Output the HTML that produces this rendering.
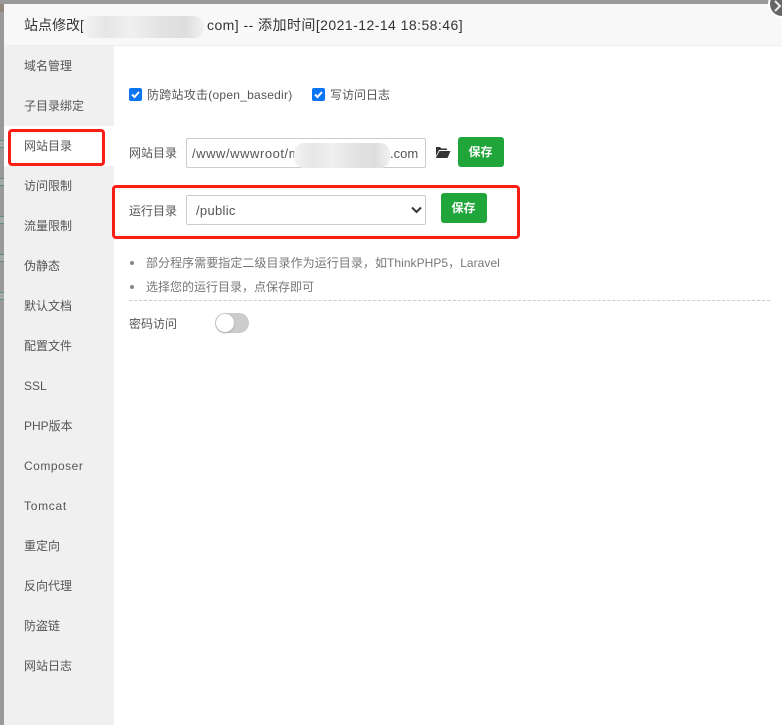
<!DOCTYPE html>
<html><head><meta charset="utf-8">
<style>
html,body{margin:0;padding:0;background:#fff}
body{width:782px;height:725px;position:relative;overflow:hidden;font-family:"Liberation Sans","Noto Sans CJK SC",sans-serif;font-size:12px;color:#555}
.a{position:absolute;white-space:nowrap}
.nav{position:absolute;left:4px;width:110px;height:40px;line-height:41px;padding-left:20px;box-sizing:border-box;color:#555}
.red{position:absolute;border:3px solid #fb1e14;border-radius:4px;box-sizing:border-box}
.btn{position:absolute;width:46px;height:30px;background:#20a53a;border-radius:3px;color:#fff;font-weight:bold;text-align:center;line-height:30px;text-indent:-1px}
.field{position:absolute;left:186px;width:240px;height:30px;border:1px solid #ccc;border-radius:2px;box-sizing:border-box;background:#fff;color:#555;line-height:30px;font-size:13px}
.cb{position:absolute;width:13px;height:13px;background:#0a76f6;border-radius:2px}
.smudge{position:absolute;background:linear-gradient(90deg,#f4f4f4,#e6e6e6 20%,#f0f0f0 40%,#e2e2e2 65%,#dedede 85%,#f2f2f2);border-radius:10px}
.dot{position:absolute;width:4px;height:4px;background:#888;border-radius:50%;left:130px}
.edge{position:absolute;left:0;width:4px;height:8px;box-sizing:border-box;border-top:1px solid #5f8f78;border-bottom:1px solid #5f8f78;background:#a4aaa6}
</style></head>
<body>
<div class="a" style="left:0;top:0;width:782px;height:4px;background:#999"></div>
<div class="a" style="left:0;top:0;width:4px;height:725px;background:#999"></div>
<div class="a" style="left:0;top:4px;width:4px;height:8px;background:#8f8a78"></div>
<div class="edge" style="top:140px"></div>
<div class="edge" style="top:178px"></div>
<div class="edge" style="top:216px"></div>
<div class="edge" style="top:254px"></div>
<div class="edge" style="top:292px"></div>

<div class="a" style="left:4px;top:4px;width:778px;height:41px;background:#f8f8f8;border-bottom:1px solid #eee"></div>
<div class="a" style="left:24px;top:15px;font-size:14px;line-height:20px;color:#333">站点修改[</div>
<div class="smudge" style="left:82px;top:16px;width:122px;height:22px"></div>
<div class="a" style="left:207px;top:15px;font-size:14px;line-height:20px;color:#333;letter-spacing:.45px">com] -- 添加时间[2021-12-14 18:58:46]</div>

<div class="a" style="left:768px;top:-10px;width:28px;height:28px;background:#666;border:2px solid #fff;border-radius:50%;box-sizing:border-box"></div>
<svg class="a" style="left:774px;top:0" width="8" height="12"><path d="M1 1L6 6L1 11" stroke="#eee" stroke-width="2" fill="none"/></svg>

<div class="a" style="left:4px;top:46px;width:110px;height:679px;background:#f0f0f0"></div>
<div class="nav" style="top:46px">域名管理</div>
<div class="nav" style="top:86px">子目录绑定</div>
<div class="nav" style="top:126px;background:#fff">网站目录</div>
<div class="nav" style="top:166px">访问限制</div>
<div class="nav" style="top:206px">流量限制</div>
<div class="nav" style="top:246px">伪静态</div>
<div class="nav" style="top:286px">默认文档</div>
<div class="nav" style="top:326px">配置文件</div>
<div class="nav" style="top:366px">SSL</div>
<div class="nav" style="top:406px">PHP版本</div>
<div class="nav" style="top:446px;letter-spacing:.5px">Composer</div>
<div class="nav" style="top:486px;letter-spacing:.7px">Tomcat</div>
<div class="nav" style="top:526px">重定向</div>
<div class="nav" style="top:566px">反向代理</div>
<div class="nav" style="top:606px">防盗链</div>
<div class="nav" style="top:646px">网站日志</div>

<div class="red" style="left:8px;top:129px;width:97px;height:37px"></div>
<div class="red" style="left:112px;top:185px;width:408px;height:54px"></div>

<div class="cb" style="left:129px;top:88px"></div>
<svg class="a" style="left:129px;top:88px" width="13" height="13"><path d="M3 6.5L5.5 9L10 4" stroke="#fff" stroke-width="2" fill="none"/></svg>
<div class="a" style="left:147px;top:86px;line-height:18px;letter-spacing:.25px">防跨站攻击(open_basedir)</div>
<div class="cb" style="left:312px;top:88px"></div>
<svg class="a" style="left:312px;top:88px" width="13" height="13"><path d="M3 6.5L5.5 9L10 4" stroke="#fff" stroke-width="2" fill="none"/></svg>
<div class="a" style="left:330px;top:86px;line-height:18px">写访问日志</div>

<div class="a" style="left:129px;top:144px;line-height:18px">网站目录</div>
<div class="field" style="top:138px;padding-left:5px;letter-spacing:.55px">/www/wwwroot/m</div>
<div class="a" style="left:390px;top:138px;height:28px;line-height:32px;font-size:13px;color:#555">.com</div>
<div class="smudge" style="left:294px;top:143px;width:96px;height:25px"></div>
<svg class="a" style="left:435px;top:146px" width="16" height="13" viewBox="0 0 16 13"><path d="M1 1H5L6.5 2.5H12V4H4L1 10V1ZM4.5 5H15.5L12.5 12H0.8Z" fill="#333"/></svg>
<div class="btn" style="left:458px;top:137px">保存</div>

<div class="a" style="left:129px;top:202px;line-height:18px">运行目录</div>
<div class="field" style="top:195px;padding-left:9px;letter-spacing:.3px">/public</div>
<svg class="a" style="left:411px;top:206px" width="11" height="8"><path d="M1 1.5L5.5 6L10 1.5" stroke="#333" stroke-width="2" fill="none"/></svg>
<div class="btn" style="left:441px;top:193px">保存</div>

<div class="dot" style="top:261px"></div>
<div class="a" style="left:146px;top:254px;line-height:18px;color:#777;letter-spacing:.05px">部分程序需要指定二级目录作为运行目录，如ThinkPHP5，Laravel</div>
<div class="dot" style="top:285px"></div>
<div class="a" style="left:146px;top:278px;line-height:18px;color:#777">选择您的运行目录，点保存即可</div>
<div class="a" style="left:129px;top:300px;width:641px;border-top:1px dashed #ccc"></div>

<div class="a" style="left:129px;top:315px;line-height:18px">密码访问</div>
<div class="a" style="left:215px;top:313px;width:34px;height:20px;background:#ccc;border-radius:10px"></div>
<div class="a" style="left:216px;top:314px;width:18px;height:18px;background:#fff;border-radius:50%;box-shadow:0 1px 2px rgba(0,0,0,.2)"></div>
</body></html>
